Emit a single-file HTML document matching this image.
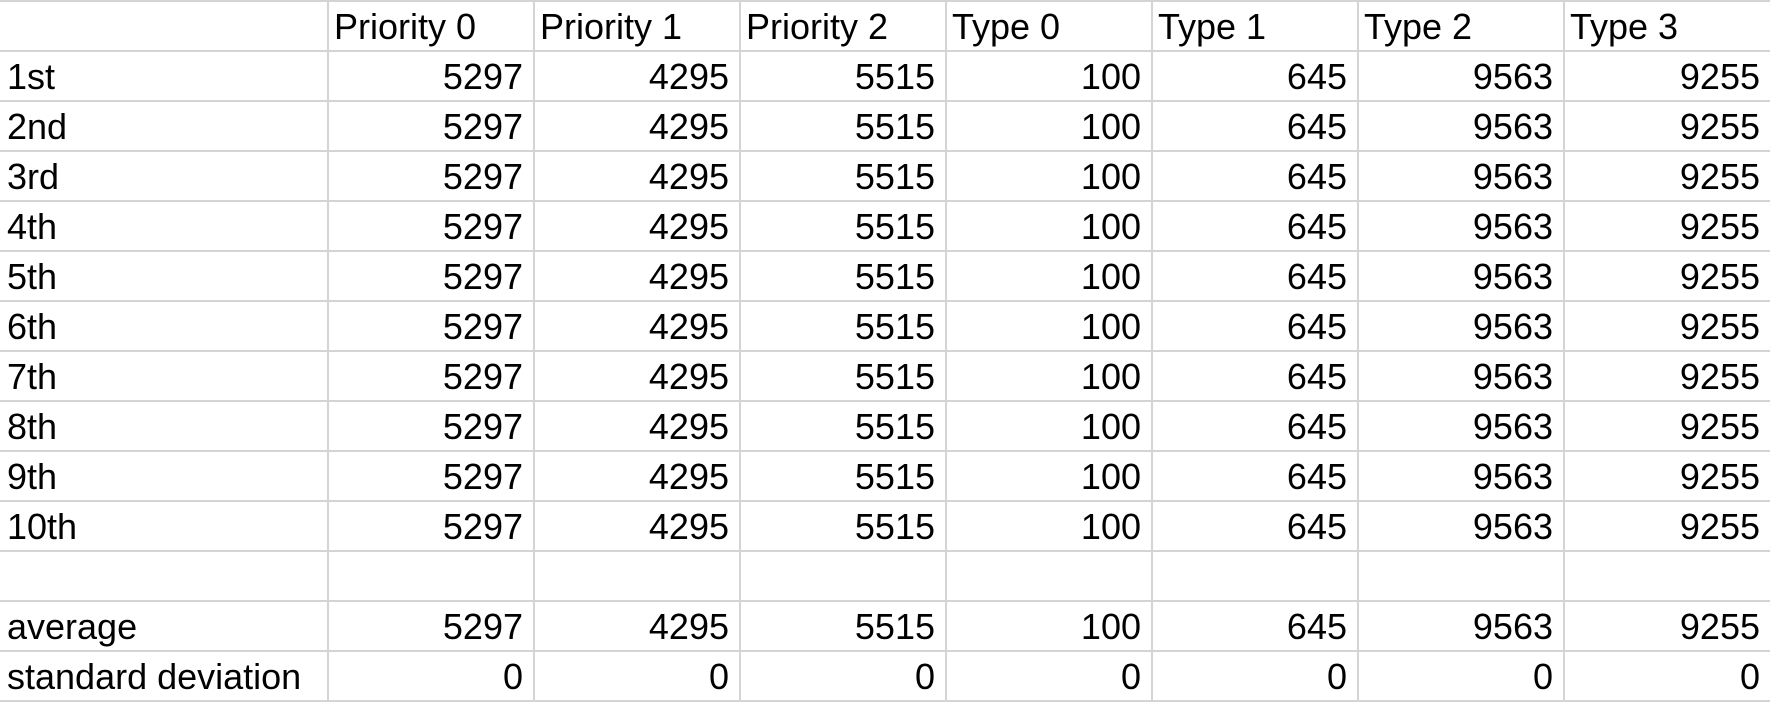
<!DOCTYPE html>
<html><head><style>
body{margin:0;width:1770px;height:700px;background:#fff;position:relative;overflow:hidden;font-family:"Liberation Sans",Arial,sans-serif;color:#000}
.h{position:absolute;left:0;width:1770px;height:2px;background:#d4d4d4}
.v{position:absolute;top:0;height:700px;width:2px;background:#d4d4d4}
.c{position:absolute;height:50px;font-size:36px;line-height:1;white-space:nowrap}
.c span{position:absolute;bottom:7px}
.l span{left:7px}
.r span{right:10px}
</style></head><body>
<div id="g"></div>
<script>
var g=document.getElementById('g'),h='';
var cols=[0,327,533,739,945,1151,1357,1563,1770];
for(var k=0;k<=14;k++)h+='<div class="h" style="top:'+(50*k)+'px"></div>';
for(var i=1;i<cols.length;i++)h+='<div class="v" style="left:'+cols[i]+'px"></div>';
var head=['','Priority 0','Priority 1','Priority 2','Type 0','Type 1','Type 2','Type 3'];
var vals=['5297','4295','5515','100','645','9563','9255'];
var labels=['1st','2nd','3rd','4th','5th','6th','7th','8th','9th','10th','','average','standard deviation'];
function cell(r,c,t,cls){return '<div class="c '+cls+'" style="top:'+(50*r+2)+'px;left:'+cols[c]+'px;width:'+(cols[c+1]-cols[c])+'px"><span>'+t+'</span></div>';}
for(var c=1;c<8;c++)h+=cell(0,c,head[c],'l');
for(var r=0;r<labels.length;r++){
 h+=cell(r+1,0,labels[r],'l');
 if(labels[r]==='')continue;
 for(var c=1;c<8;c++)h+=cell(r+1,c,labels[r]==='standard deviation'?'0':vals[c-1],'r');
}
g.innerHTML=h;
</script>
</body></html>
